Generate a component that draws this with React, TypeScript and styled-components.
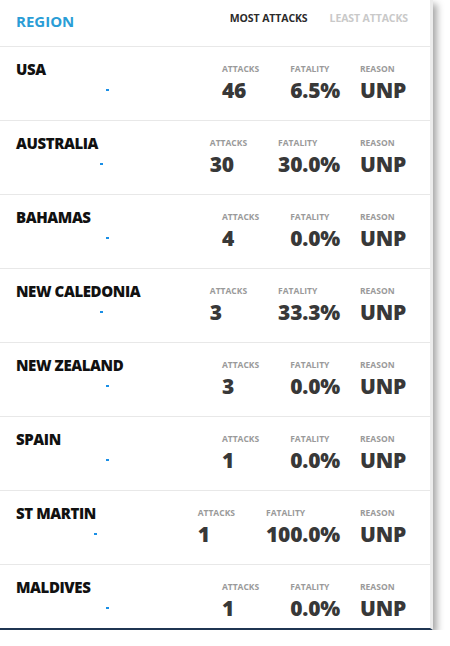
import React from 'react';
import styled, { createGlobalStyle } from 'styled-components';

const GlobalStyle = createGlobalStyle`
  html, body {
    margin: 0;
    padding: 0;
    background: #fff;
  }
  body {
    font-family: 'Open Sans', 'Noto Sans', sans-serif;
  }
`;

const Card = styled.div`
  width: 430px;
  border-right: 3px solid #ececec;
  border-bottom: 2px solid #1f3552;
  background: #fff;
  box-shadow: 4px 4px 7px rgba(0, 0, 0, 0.35);
`;

const Header = styled.div`
  display: flex;
  align-items: center;
  height: 46px;
  padding: 0 22px 0 16px;
  border-bottom: 1px solid #e8e8e8;
`;

const Title = styled.div`
  flex: 1;
  color: #2a9dd6;
  font-size: 15px;
  font-weight: 700;
  margin-top: -4px;
`;

const Tab = styled.div<{ $active?: boolean }>`
  font-size: 10.5px;
  font-weight: 700;
  letter-spacing: -0.1px;
  color: ${(p) => (p.$active ? '#2b2b2b' : '#c9c9c9')};
  margin-left: 22px;
  margin-top: -10px;
`;

const Row = styled.div<{ $last?: boolean }>`
  display: flex;
  box-sizing: border-box;
  height: ${(p) => (p.$last ? '63px' : '74px')};
  padding: 12px 22px 0 0;
  border-bottom: ${(p) => (p.$last ? 'none' : '1px solid #e8e8e8')};
`;

const NameCol = styled.div`
  flex: 1;
  display: flex;
  flex-direction: column;
  margin-right: 6px;
`;

const Name = styled.div`
  padding-left: 16px;
  font-size: 15px;
  line-height: 20px;
  font-weight: 800;
  letter-spacing: -0.4px;
  color: #111;
`;

const Dash = styled.div`
  align-self: center;
  width: 3px;
  height: 2px;
  margin-top: 10px;
  background: #1a8fe6;
`;

const Stat = styled.div<{ $gap: number; $width?: number }>`
  display: flex;
  flex-direction: column;
  margin-right: ${(p) => p.$gap}px;
  width: ${(p) => (p.$width ? `${p.$width}px` : 'auto')};
  padding-top: 5px;
`;

const Label = styled.div`
  font-size: 8.5px;
  line-height: 10px;
  font-weight: 700;
  color: #9a9a9a;
`;

const Value = styled.div`
  margin-top: 4px;
  font-size: 21px;
  line-height: 25px;
  font-weight: 800;
  letter-spacing: -0.2px;
  color: #383838;
`;

type Region = {
  name: string;
  attacks: number;
  fatality: string;
  reason: string;
};

const regions: Region[] = [
  { name: 'USA', attacks: 46, fatality: '6.5%', reason: 'UNP' },
  { name: 'AUSTRALIA', attacks: 30, fatality: '30.0%', reason: 'UNP' },
  { name: 'BAHAMAS', attacks: 4, fatality: '0.0%', reason: 'UNP' },
  { name: 'NEW CALEDONIA', attacks: 3, fatality: '33.3%', reason: 'UNP' },
  { name: 'NEW ZEALAND', attacks: 3, fatality: '0.0%', reason: 'UNP' },
  { name: 'SPAIN', attacks: 1, fatality: '0.0%', reason: 'UNP' },
  { name: 'ST MARTIN', attacks: 1, fatality: '100.0%', reason: 'UNP' },
  { name: 'MALDIVES', attacks: 1, fatality: '0.0%', reason: 'UNP' },
];

const App: React.FC = () => {
  return (
    <>
      <GlobalStyle />
      <Card>
        <Header>
          <Title>REGION</Title>
          <Tab $active>MOST ATTACKS</Tab>
          <Tab>LEAST ATTACKS</Tab>
        </Header>
        {regions.map((r, i) => (
          <Row key={r.name} $last={i === regions.length - 1}>
            <NameCol>
              <Name>{r.name}</Name>
              <Dash />
            </NameCol>
            <Stat $gap={31}>
              <Label>ATTACKS</Label>
              <Value>{r.attacks}</Value>
            </Stat>
            <Stat $gap={20}>
              <Label>FATALITY</Label>
              <Value>{r.fatality}</Value>
            </Stat>
            <Stat $gap={0} $width={48}>
              <Label>REASON</Label>
              <Value>{r.reason}</Value>
            </Stat>
          </Row>
        ))}
      </Card>
    </>
  );
};

export default App;
